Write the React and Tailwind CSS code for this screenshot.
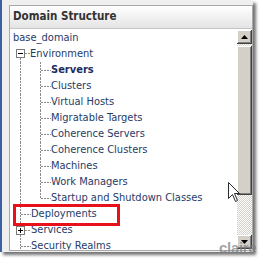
import React from "react"

const LINE = "#8a8a8a"

const rows = [
    { text: "base_domain", kind: "root" },
    { text: "Environment", kind: "open" },
    { text: "Servers", kind: "child", bold: true },
    { text: "Clusters", kind: "child" },
    { text: "Virtual Hosts", kind: "child" },
    { text: "Migratable Targets", kind: "child" },
    { text: "Coherence Servers", kind: "child" },
    { text: "Coherence Clusters", kind: "child" },
    { text: "Machines", kind: "child" },
    { text: "Work Managers", kind: "child" },
    { text: "Startup and Shutdown Classes", kind: "lastChild" },
    { text: "Deployments", kind: "leaf" },
    { text: "Services", kind: "closed" },
    { text: "Security Realms", kind: "leaf" },
]

// tree connector drawn for one 16px row
const Connector = ({ kind }) => {
    const dash = { stroke: LINE, strokeWidth: 1, strokeDasharray: "2 1" }
    if (kind === "root") return <div className="w-[3px] shrink-0" />
    if (kind === "open") {
        return (
            <svg width="20" height="16" className="shrink-0">
                <rect x="6.5" y="3.5" width="8" height="8" fill="#fff" stroke="#7a7a7a" />
                <line x1="8" y1="7.5" x2="13" y2="7.5" stroke="#000" />
                <line x1="15" y1="7.5" x2="20" y2="7.5" {...dash} />
                <line x1="10.5" y1="12" x2="10.5" y2="16" {...dash} />
            </svg>
        )
    }
    if (kind === "closed") {
        return (
            <svg width="21" height="16" className="shrink-0">
                <line x1="10.5" y1="0" x2="10.5" y2="4" {...dash} />
                <line x1="10.5" y1="13" x2="10.5" y2="16" {...dash} />
                <rect x="6.5" y="4.5" width="8" height="8" fill="#fff" stroke="#7a7a7a" />
                <line x1="8" y1="8.5" x2="13" y2="8.5" stroke="#000" />
                <line x1="10.5" y1="6" x2="10.5" y2="11" stroke="#000" />
                <line x1="15" y1="8.5" x2="21" y2="8.5" {...dash} />
            </svg>
        )
    }
    if (kind === "leaf") {
        return (
            <svg width="21" height="16" className="shrink-0">
                <line x1="10.5" y1="0" x2="10.5" y2="16" {...dash} />
                <line x1="11" y1="8.5" x2="21" y2="8.5" {...dash} />
            </svg>
        )
    }
    return (
        <svg width="41" height="16" className="shrink-0">
            <line x1="10.5" y1="0" x2="10.5" y2="16" {...dash} />
            <line x1="30.5" y1="0" x2="30.5" y2={kind === "lastChild" ? 8 : 16} {...dash} />
            <line x1="31" y1="8.5" x2="41" y2="8.5" {...dash} />
        </svg>
    )
}

const ScrollButton = ({ up }) => (
    <div className="h-[14px] w-[15px] flex items-center justify-center bg-[#d4d0c8] shadow-[inset_-1px_-1px_#404040,inset_1px_1px_#ffffff,inset_-2px_-2px_#808080]">
        <svg width="7" height="4" className={up ? "" : "rotate-180"}>
            <polygon points="3.5,0 7,4 0,4" fill="#000" />
        </svg>
    </div>
)

const App = () => {
    return (
        <div className="relative w-[263px] h-[265px] bg-white font-['DejaVu_Sans_Condensed','DejaVu_Sans',sans-serif] overflow-hidden">
            <div className="w-[253px] h-[252px] border-l-2 border-[#3b5fa3] bg-[#efefef] pl-[7px] pt-[5px] shadow-[3px_3px_3px_rgba(0,0,0,0.55)]">
                <div className="relative w-[244px] h-[246px] border border-[#a9a9a9] bg-white flex flex-col">
                    {/* header */}
                    <div className="h-[23px] shrink-0 flex items-center pl-[3px] bg-gradient-to-b from-white to-[#e4e4e4] border-b border-[#c4c4c4] text-[11.5px] font-bold text-[#333333]">
                        Domain Structure
                    </div>

                    <div className="flex flex-1 min-h-0">
                        {/* tree */}
                        <div className="flex-1 overflow-hidden pt-[1px]">
                            {rows.map((row) => (
                                <div key={row.text} className="h-[16px] flex items-center">
                                    <Connector kind={row.kind} />
                                    <span className={`text-[11px] leading-[16px] whitespace-nowrap ${row.bold ? "font-bold text-[#1a2d62]" : "text-[#1f3b68]"}`}>
                                        {row.text}
                                    </span>
                                </div>
                            ))}
                        </div>

                        {/* scrollbar */}
                        <div className="w-[15px] shrink-0 flex flex-col pt-[1px] pb-[1px]">
                            <ScrollButton up />
                            <div className="h-[2px] [background-image:repeating-conic-gradient(#d4d0c8_0%_25%,#ffffff_0%_50%)] [background-size:2px_2px]" />
                            <div className="h-[149px] bg-[#d4d0c8] shadow-[inset_-1px_-1px_#404040,inset_1px_1px_#ffffff,inset_-2px_-2px_#808080]" />
                            <div className="flex-1 [background-image:repeating-conic-gradient(#d4d0c8_0%_25%,#ffffff_0%_50%)] [background-size:2px_2px]" />
                            <ScrollButton />
                        </div>
                    </div>

                    {/* highlight annotation */}
                    <div className="absolute left-[3px] top-[198px] w-[107px] h-[22px] border-[3px] border-[#e8101a]" />
                </div>
            </div>

            {/* mouse pointer */}
            <svg className="absolute left-[228px] top-[182px]" width="13" height="21" viewBox="0 0 13 21">
                <path d="M0.5 0.5 L0.5 16.5 L4.5 12.5 L7.5 19.5 L9.5 18.5 L6.5 11.5 L11.5 11.5 Z" fill="#fff" stroke="#2a2a2a" strokeWidth="1" />
            </svg>

            {/* watermark */}
            <div className="absolute left-[219px] top-[240px] text-[15px] leading-[16px] font-bold tracking-[-0.3px] text-[#7c7c7c]/70 font-['Liberation_Sans',sans-serif]">
                claire
            </div>
        </div>
    )
}

export default App
